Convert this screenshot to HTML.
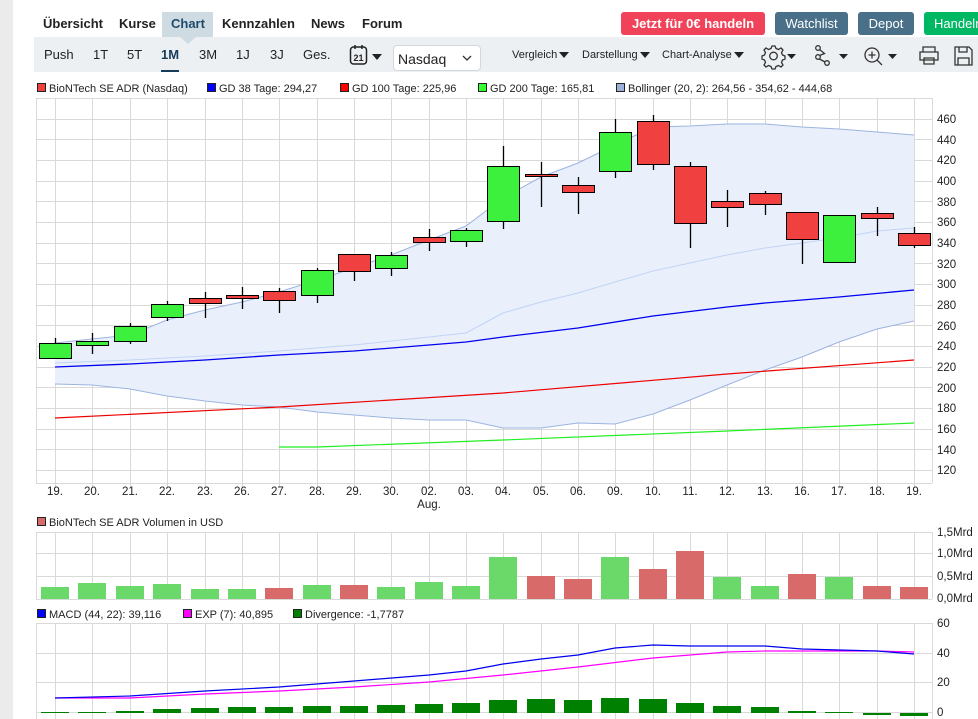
<!DOCTYPE html>
<html><head><meta charset="utf-8"><style>
*{margin:0;padding:0;box-sizing:border-box}
body{width:978px;height:719px;overflow:hidden;background:#fff;font-family:"Liberation Sans",sans-serif;position:relative;color:#1a1a1a}
.a{position:absolute;white-space:nowrap}
.nav{top:16px;font-size:13px;font-weight:bold;color:#222}
.btn{top:12px;height:23px;border-radius:3px;color:#fff;font-size:13px;line-height:23px;text-align:center}
.tb{top:47px;font-size:13px;color:#222}
.dd{top:49px;font-size:11px;color:#222}
.car{display:inline-block;width:0;height:0;border-left:5px solid transparent;border-right:5px solid transparent;border-top:6px solid #222;vertical-align:middle;margin-left:2px}
</style></head><body>
<div class="a" style="left:0;top:0;width:13px;height:719px;background:#ebebeb"></div>
<div class="a" style="left:162px;top:12px;width:51px;height:25px;background:#cfdbe3"></div>
<div class="a" style="left:180px;top:37px;width:0;height:0;border-left:8px solid transparent;border-right:8px solid transparent;border-top:7px solid #cfdbe3;z-index:2"></div>
<div class="a nav" style="left:43px">Übersicht</div>
<div class="a nav" style="left:119px">Kurse</div>
<div class="a nav" style="left:171px;color:#1f4a6b">Chart</div>
<div class="a nav" style="left:222px">Kennzahlen</div>
<div class="a nav" style="left:311px">News</div>
<div class="a nav" style="left:362px">Forum</div>
<div class="a btn" style="left:621px;width:144px;background:#f0435a;font-weight:bold">Jetzt für 0€ handeln</div>
<div class="a btn" style="left:775px;width:73px;background:#4a7089">Watchlist</div>
<div class="a btn" style="left:858px;width:56px;background:#4a7089">Depot</div>
<div class="a btn" style="left:924px;width:70px;background:#00b764;text-align:left;padding-left:10px">Handeln</div>
<div class="a" style="left:34px;top:37px;width:944px;height:35px;background:#edf0f3"></div>
<div class="a tb" style="left:44px">Push</div>
<div class="a tb" style="left:93px">1T</div>
<div class="a tb" style="left:127px">5T</div>
<div class="a tb" style="left:161px;font-weight:bold;color:#173c5a">1M</div>
<div class="a" style="left:161px;top:70px;width:18px;height:2px;background:#173c5a"></div>
<div class="a tb" style="left:199px">3M</div>
<div class="a tb" style="left:236px">1J</div>
<div class="a tb" style="left:270px">3J</div>
<div class="a tb" style="left:303px">Ges.</div>
<svg class="a" style="left:349px;top:44px" width="36" height="24" viewBox="0 0 36 24"><rect x="1.5" y="3" width="16" height="17" rx="3" fill="none" stroke="#222" stroke-width="1.5"/><line x1="6" y1="1" x2="6" y2="5" stroke="#222" stroke-width="1.5"/><line x1="13" y1="1" x2="13" y2="5" stroke="#222" stroke-width="1.5"/><text x="9.5" y="17" font-size="9" font-weight="bold" text-anchor="middle" font-family="Liberation Sans" fill="#222">21</text><path d="M23 10h10l-5 6z" fill="#222"/></svg>
<div class="a" style="left:393px;top:45px;width:88px;height:26px;background:#fff;border:1px solid #d4d8dc;border-radius:4px;font-size:14px;padding:5px 0 0 4px;color:#222">Nasdaq<svg style="position:absolute;left:68px;top:9px" width="10" height="7"><path d="M1 1l4 4 4-4" fill="none" stroke="#333" stroke-width="1.3"/></svg></div>
<div class="a dd" style="left:512px">Vergleich<span class="car"></span></div>
<div class="a dd" style="left:582px">Darstellung<span class="car"></span></div>
<div class="a dd" style="left:662px">Chart-Analyse<span class="car"></span></div>
<svg class="a" style="left:760px;top:42px" width="218" height="28" viewBox="0 0 218 28">
<g fill="none" stroke="#333" stroke-width="1.3">
<path d="M12 5h3l1 2.5 2.5 1 2.5-1.5 2 2-1.5 2.5 1 2.5 2.5 1v3l-2.5 1-1 2.5 1.5 2.5-2 2-2.5-1.5-2.5 1-1 2.5h-3l-1-2.5-2.5-1-2.5 1.5-2-2 1.5-2.5-1-2.5-2.5-1v-3l2.5-1 1-2.5-1.5-2.5 2-2 2.5 1.5 2.5-1z" transform="translate(0,-1)"/><circle cx="13.5" cy="14" r="3.8"/>
<circle cx="58" cy="6" r="2.3"/><circle cx="58" cy="15" r="2.3"/><circle cx="67" cy="21" r="2.3"/><path d="M59.5 7.5l5 4-5 2M59.5 17l5.5 3"/>
<circle cx="112" cy="13" r="7"/><path d="M117 18l5 5M112 9.5v7M108.5 13h7"/>
<path d="M163 10v-5h12v5M160 10h18v8h-18zM164 16h10v6h-10z"/>
<path d="M195 5h14l3 3v15h-17zM199 5v5h8v-5M198 23v-7h11v7"/>
</g>
<path d="M27 12h9l-4.5 5z M79 12h9l-4.5 5z M128 12h9l-4.5 5z" fill="#222"/>
</svg>

<svg class="a" style="left:0;top:0" width="978" height="719" viewBox="0 0 978 719" font-family="Liberation Sans" font-size="11">
<g fill="#222">
<rect x="37.5" y="83.5" width="8" height="8" fill="#f04040" stroke="#222"/><text x="49" y="92">BioNTech SE ADR (Nasdaq)</text>
<rect x="207.5" y="83.5" width="8" height="8" fill="#0000ff" stroke="#222"/><text x="219" y="92">GD 38 Tage: 294,27</text>
<rect x="340.5" y="83.5" width="8" height="8" fill="#f00" stroke="#222"/><text x="352" y="92">GD 100 Tage: 225,96</text>
<rect x="478.5" y="83.5" width="8" height="8" fill="#3f3" stroke="#222"/><text x="490" y="92">GD 200 Tage: 165,81</text>
<rect x="616.5" y="83.5" width="8" height="8" fill="#9db0d8" stroke="#222"/><text x="628" y="92">Bollinger (20, 2): 264,56 - 354,62 - 444,68</text>
<rect x="37.5" y="517.5" width="8" height="8" fill="#d96a6a" stroke="#222"/><text x="49" y="526">BioNTech SE ADR Volumen in USD</text>
<rect x="37.5" y="609.5" width="8" height="8" fill="#00f" stroke="#222"/><text x="49" y="618">MACD (44, 22): 39,116</text>
<rect x="183.5" y="609.5" width="8" height="8" fill="#f0f" stroke="#222"/><text x="195" y="618">EXP (7): 40,895</text>
<rect x="293.5" y="609.5" width="8" height="8" fill="#008000" stroke="#222"/><text x="305" y="618">Divergence: -1,7787</text>
</g>
<g stroke="#d9d9d9" stroke-width="1">
<path d="M36.5 98V483M932.5 98V483M36.5 532V599M932.5 532V599M36.5 623V719M932.5 623V719"/>
<path d="M55.5 98V488M92.5 98V488M130.5 98V488M167.5 98V488M205.5 98V488M242.5 98V488M279.5 98V488M317.5 98V488M354.5 98V488M391.5 98V488M429.5 98V488M466.5 98V488M503.5 98V488M541.5 98V488M578.5 98V488M615.5 98V488M653.5 98V488M690.5 98V488M727.5 98V488M765.5 98V488M802.5 98V488M839.5 98V488M877.5 98V488M914.5 98V488"/>
<path d="M55.5 532V599M92.5 532V599M130.5 532V599M167.5 532V599M205.5 532V599M242.5 532V599M279.5 532V599M317.5 532V599M354.5 532V599M391.5 532V599M429.5 532V599M466.5 532V599M503.5 532V599M541.5 532V599M578.5 532V599M615.5 532V599M653.5 532V599M690.5 532V599M727.5 532V599M765.5 532V599M802.5 532V599M839.5 532V599M877.5 532V599M914.5 532V599"/>
<path d="M55.5 623V719M92.5 623V719M130.5 623V719M167.5 623V719M205.5 623V719M242.5 623V719M279.5 623V719M317.5 623V719M354.5 623V719M391.5 623V719M429.5 623V719M466.5 623V719M503.5 623V719M541.5 623V719M578.5 623V719M615.5 623V719M653.5 623V719M690.5 623V719M727.5 623V719M765.5 623V719M802.5 623V719M839.5 623V719M877.5 623V719M914.5 623V719"/>
<path d="M36 98.5H932M36 119.5H932M36 139.5H932M36 160.5H932M36 181.5H932M36 201.5H932M36 222.5H932M36 243.5H932M36 263.5H932M36 284.5H932M36 305.5H932M36 325.5H932M36 346.5H932M36 367.5H932M36 387.5H932M36 408.5H932M36 429.5H932M36 449.5H932M36 470.5H932M36 483.5H932"/>
<path d="M36 532.5H932M36 553.5H932M36 576.5H932M36 599.5H932"/>
<path d="M36 623.5H932M36 653.5H932M36 682.5H932M36 712.5H932"/>
</g>
<polygon fill="#e9f0fc" points="55,343 92,339 130,335 167,320 205,310 242,302 279,292 317,280 354,268 391,255 429,240 466,226 503,198 541,177 578,163 615,145 653,127 690,126 727,124 765,124 802,127 839,129 877,132 914,135 914,321 877,329 839,342 802,357 765,370 727,385 690,400 653,414 615,424 578,423 541,428 503,428 466,420 429,420 391,418 354,415 317,412 279,407 242,405 205,401 167,396 130,389 92,385 55,384"/>
<g fill="none" stroke-width="1">
<polyline stroke="#9db4e0" points="55,343 92,339 130,335 167,320 205,310 242,302 279,292 317,280 354,268 391,255 429,240 466,226 503,198 541,177 578,163 615,145 653,127 690,126 727,124 765,124 802,127 839,129 877,132 914,135"/>
<polyline stroke="#9db4e0" points="55,384 92,385 130,389 167,396 205,401 242,405 279,407 317,412 354,415 391,418 429,420 466,420 503,428 541,428 578,423 615,424 653,414 690,400 727,385 765,370 802,357 839,342 877,329 914,321"/>
<polyline stroke="#c0d4f4" points="55,363 130,360 205,356 279,351 354,345 429,337 466,333 503,313 541,302 578,293 615,282 653,271 690,263 727,255 765,248 802,243 839,238 877,231 914,228"/>
<polyline stroke="#0000ee" stroke-width="1.3" points="55,367 130,364 205,360 279,355 354,351 429,345 466,342 503,337 578,328 653,316 727,307 765,303 839,297 914,290"/>
<polyline stroke="#ee0000" stroke-width="1.2" points="55,418 279,407 503,393 727,374 914,360"/>
<polyline stroke="#22ee22" stroke-width="1.2" points="279,447 317,447 503,440 727,431 914,423"/>
</g>
<g stroke="#000" stroke-width="1.3">
<path d="M55.5 338V359M92.5 333V354M130.5 323V344M167.5 301V321M205.5 292V318M242.5 287V309M279.5 288V313M317.5 268V303M354.5 254V281M391.5 252V276M429.5 229V251M466.5 228V247M503.5 146V229M541.5 162V207M578.5 177V214M615.5 119V178M653.5 115V170M690.5 162V248M727.5 190V227M765.5 191V215M802.5 212V264M839.5 215V263M877.5 207V236M914.5 227V248"/>
</g>
<g stroke="#000" stroke-width="1">
<g fill="#3ef03e">
<rect x="39.5" y="343.5" width="32" height="15"/><rect x="76.5" y="341.5" width="32" height="4"/><rect x="114.5" y="326.5" width="32" height="15"/><rect x="151.5" y="304.5" width="32" height="13"/><rect x="301.5" y="270.5" width="32" height="25"/><rect x="375.5" y="255.5" width="32" height="13"/><rect x="450.5" y="230.5" width="32" height="11"/><rect x="487.5" y="166.5" width="32" height="55"/><rect x="599.5" y="132.5" width="32" height="39"/><rect x="823.5" y="215.5" width="32" height="47"/>
</g>
<g fill="#f04040">
<rect x="189.5" y="298.5" width="32" height="5"/><rect x="226.5" y="295.5" width="32" height="3"/><rect x="263.5" y="291.5" width="32" height="9"/><rect x="338.5" y="254.5" width="32" height="17"/><rect x="413.5" y="237.5" width="32" height="5"/><rect x="525.5" y="174.5" width="32" height="2"/><rect x="562.5" y="185.5" width="32" height="7"/><rect x="637.5" y="121.5" width="32" height="43"/><rect x="674.5" y="166.5" width="32" height="57"/><rect x="711.5" y="201.5" width="32" height="6"/><rect x="749.5" y="193.5" width="32" height="11"/><rect x="786.5" y="212.5" width="32" height="27"/><rect x="861.5" y="213.5" width="32" height="5"/><rect x="898.5" y="233.5" width="32" height="12"/>
</g></g>
<g fill="#222" font-size="11.5">
<text x="937" y="123">460</text><text x="937" y="144">440</text><text x="937" y="164">420</text><text x="937" y="185">400</text><text x="937" y="206">380</text><text x="937" y="226">360</text><text x="937" y="247">340</text><text x="937" y="268">320</text><text x="937" y="288">300</text><text x="937" y="309">280</text><text x="937" y="330">260</text><text x="937" y="350">240</text><text x="937" y="371">220</text><text x="937" y="392">200</text><text x="937" y="412">180</text><text x="937" y="433">160</text><text x="937" y="454">140</text><text x="937" y="474">120</text>
<text x="937" y="536">1,5Mrd</text><text x="937" y="557">1,0Mrd</text><text x="937" y="580">0,5Mrd</text><text x="937" y="602">0,0Mrd</text>
<text x="937" y="627">60</text><text x="937" y="657">40</text><text x="937" y="686">20</text><text x="937" y="716">0</text>
<g text-anchor="middle">
<text x="55" y="495">19.</text><text x="92" y="495">20.</text><text x="130" y="495">21.</text><text x="167" y="495">22.</text><text x="205" y="495">23.</text><text x="242" y="495">26.</text><text x="279" y="495">27.</text><text x="317" y="495">28.</text><text x="354" y="495">29.</text><text x="391" y="495">30.</text><text x="429" y="495">02.</text><text x="466" y="495">03.</text><text x="503" y="495">04.</text><text x="541" y="495">05.</text><text x="578" y="495">06.</text><text x="615" y="495">09.</text><text x="653" y="495">10.</text><text x="690" y="495">11.</text><text x="727" y="495">12.</text><text x="765" y="495">13.</text><text x="802" y="495">16.</text><text x="839" y="495">17.</text><text x="877" y="495">18.</text><text x="914" y="495">19.</text>
<text x="429" y="508">Aug.</text></g>
</g>
<g fill="#6ad96a">
<rect x="41" y="587" width="28" height="12"/><rect x="78" y="583" width="28" height="16"/><rect x="116" y="586" width="28" height="13"/><rect x="153" y="584" width="28" height="15"/><rect x="191" y="589" width="28" height="10"/><rect x="228" y="589" width="28" height="10"/><rect x="303" y="585" width="28" height="14"/><rect x="377" y="587" width="28" height="12"/><rect x="415" y="582" width="28" height="17"/><rect x="452" y="586" width="28" height="13"/><rect x="489" y="557" width="28" height="42"/><rect x="601" y="557" width="28" height="42"/><rect x="713" y="577" width="28" height="22"/><rect x="751" y="586" width="28" height="13"/><rect x="825" y="577" width="28" height="22"/>
</g>
<g fill="#d96a6a">
<rect x="265" y="588" width="28" height="11"/><rect x="340" y="585" width="28" height="14"/><rect x="527" y="576" width="28" height="23"/><rect x="564" y="579" width="28" height="20"/><rect x="639" y="569" width="28" height="30"/><rect x="676" y="551" width="28" height="48"/><rect x="788" y="574" width="28" height="25"/><rect x="863" y="586" width="28" height="13"/><rect x="900" y="587" width="28" height="12"/>
</g>
<g fill="#008000">
<rect x="41" y="712" width="28" height="1"/><rect x="78" y="712" width="28" height="1"/><rect x="116" y="711" width="28" height="2"/><rect x="153" y="709" width="28" height="4"/><rect x="191" y="708" width="28" height="5"/><rect x="228" y="707" width="28" height="6"/><rect x="265" y="707" width="28" height="6"/><rect x="303" y="706" width="28" height="7"/><rect x="340" y="706" width="28" height="7"/><rect x="377" y="705" width="28" height="8"/><rect x="415" y="704" width="28" height="9"/><rect x="452" y="703" width="28" height="10"/><rect x="489" y="700" width="28" height="13"/><rect x="527" y="699" width="28" height="14"/><rect x="564" y="700" width="28" height="13"/><rect x="601" y="698" width="28" height="15"/><rect x="639" y="699" width="28" height="14"/><rect x="676" y="703" width="28" height="10"/><rect x="713" y="706" width="28" height="7"/><rect x="751" y="707" width="28" height="6"/><rect x="788" y="711" width="28" height="2"/><rect x="825" y="712" width="28" height="1"/><rect x="863" y="713" width="28" height="2"/><rect x="900" y="713" width="28" height="3"/>
</g>
<g fill="none" stroke-width="1.2">
<polyline stroke="#ff00ff" points="55,698 130,698 205,694 279,691 354,687 429,682 503,675 578,667 653,658 727,652 765,651 877,651 914,652"/>
<polyline stroke="#0000ee" points="55,698 130,696 205,691 279,687 354,681 429,675 466,671 503,664 541,659 578,655 615,648 653,645 690,646 765,646 802,649 877,651 914,654"/>
</g>
</svg>
</body></html>
